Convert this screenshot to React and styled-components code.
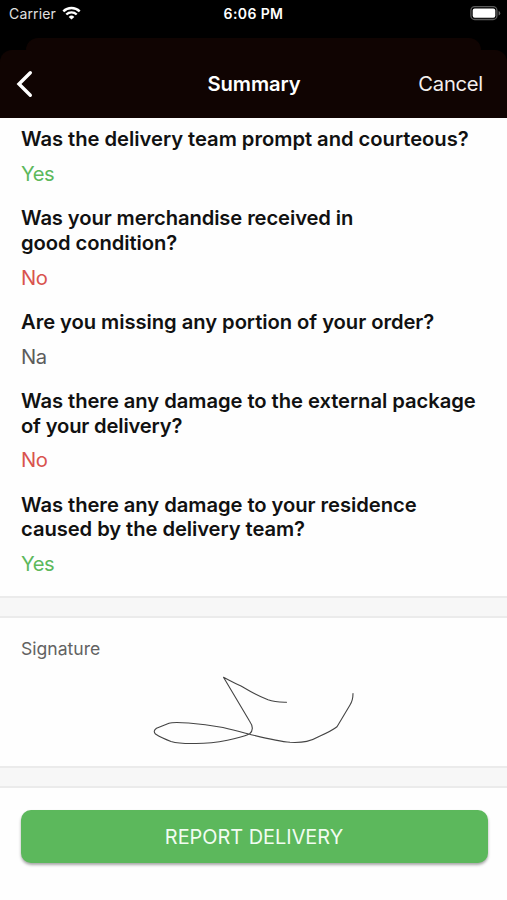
import React from "react";
import styled, { createGlobalStyle } from "styled-components";

const GlobalStyle = createGlobalStyle`
  * { box-sizing: border-box; }
  html, body { margin: 0; padding: 0; background: #fefefe; }
  body { font-family: Inter, "Liberation Sans", sans-serif; }
`;

const Screen = styled.main`
  width: 507px;
  height: 900px;
  overflow: hidden;
  display: flex;
  flex-direction: column;
  background: #fefefe;
`;

const Top = styled.div`
  height: 118px;
  flex: none;
  background: #000;
`;

const StatusBar = styled.div`
  height: 38px;
  padding: 6px 6px 0 9px;
  display: grid;
  grid-template-columns: 1fr auto 1fr;
  align-items: start;
  color: #fff;
`;

const Carrier = styled.div`
  display: flex;
  gap: 6px;
  font-size: 14px;
  line-height: 16px;
  letter-spacing: 0.15px;
  color: #e0e0e0;
`;

const Clock = styled.div`
  margin-right: 3px;
  font-size: 14px;
  font-weight: 600;
  line-height: 16px;
  letter-spacing: 0.4px;
`;

const Battery = styled.svg`
  justify-self: end;
`;

const SheetEdge = styled.div`
  height: 12px;
  margin: 0 26px;
  border-radius: 12px 12px 0 0;
  background: #100402;
`;

const NavBar = styled.header`
  height: 68px;
  padding: 0 24px 0 16px;
  display: grid;
  grid-template-columns: 1fr auto 1fr;
  align-items: center;
  border-radius: 12px 12px 0 0;
  background: #100402;
  color: #fff;
`;

const BackButton = styled.button`
  justify-self: start;
  display: flex;
  padding: 0;
  border: 0;
  background: none;
  color: inherit;
`;

const Title = styled.h1`
  margin: 0 0 0 9px;
  font-size: 20.2px;
  font-weight: 600;
  line-height: 24px;
  letter-spacing: -0.1px;
`;

const CancelButton = styled.button`
  justify-self: end;
  padding: 0;
  border: 0;
  background: none;
  font: 400 20.2px/24px Inter, sans-serif;
  letter-spacing: -0.25px;
  color: #f4efee;
`;

const Questions = styled.section`
  height: 478px;
  flex: none;
  padding: 9.4px 21px 0;
  display: flex;
  flex-direction: column;
  gap: 20px;
`;

const Item = styled.article`
  display: flex;
  flex-direction: column;
  gap: 10.1px;
  font-size: 20.2px;
  line-height: 24.5px;
`;

const Question = styled.div`
  font-weight: 600;
  color: #111;
`;

const Line = styled.span`
  display: block;
  width: max-content;
  white-space: nowrap;
  letter-spacing: ${(p) => p.$track}px;
`;

const tones = { Yes: "#5cb85c", No: "#d9534f", Na: "#5c5c5c" };

const Answer = styled.div`
  width: max-content;
  letter-spacing: -0.4px;
  color: ${(p) => tones[p.$value]};
`;

const Divider = styled.div`
  height: 22px;
  flex: none;
  border: solid #ebebeb;
  border-width: 2px 0;
  background: #f7f7f7;
`;

const SignaturePanel = styled.section`
  height: 148px;
  flex: none;
  padding: 20px 21px 0;
`;

const SignatureLabel = styled.div`
  width: max-content;
  font-size: 17.6px;
  line-height: 22px;
  color: #626262;
`;

const SignatureDrawing = styled.svg`
  display: block;
  margin: 5px 0 0 119px;
`;

const Footer = styled.footer`
  padding: 22px 19.5px 0 20.5px;
`;

const ReportButton = styled.button`
  display: block;
  width: 100%;
  height: 53px;
  padding: 1px 0 0;
  border: 0;
  border-radius: 10px;
  background: #5cb85c;
  box-shadow: 0 2px 3px rgba(0, 0, 0, 0.35);
  font: 400 19.9px/52px Inter, sans-serif;
  letter-spacing: 0;
  color: #f1fcf1;
`;

const items = [
  { lines: [["Was the delivery team prompt and courteous?", -0.03]], answer: "Yes" },
  { lines: [["Was your merchandise received in", -0.1], ["good condition?", -0.07]], answer: "No" },
  { lines: [["Are you missing any portion of your order?", -0.05]], answer: "Na" },
  { lines: [["Was there any damage to the external package", -0.05], ["of your delivery?", -0.17]], answer: "No" },
  { lines: [["Was there any damage to your residence", -0.05], ["caused by the delivery team?", -0.07]], answer: "Yes" },
];

export default function App() {
  return (
    <>
      <GlobalStyle />
      <Screen>
        <Top>
          <StatusBar>
            <Carrier>
              Carrier
              <svg width="19" height="14" viewBox="0 0 19 14" fill="none" stroke="#fff" strokeWidth="2.4">
                <path d="M1.3 5.3a11.8 11.8 0 0 1 16.4 0" />
                <path d="M4.3 8.5a7.5 7.5 0 0 1 10.4 0" />
                <path d="M6.7 10.9a4 4 0 0 1 5.6 0L9.5 13.6z" fill="#fff" stroke="none" />
              </svg>
            </Carrier>
            <Clock>6:06 PM</Clock>
            <Battery width="31" height="15" viewBox="0 0 31 15">
              <rect x="0.9" y="0.7" width="26" height="12.8" rx="3.8" fill="none" stroke="#5b5b5b" strokeWidth="1.3" />
              <rect x="2.7" y="2.5" width="22.6" height="9.2" rx="2" fill="#fff" />
              <path d="M28.6 5a2.3 2.3 0 0 1 0 4.4z" fill="#666" />
            </Battery>
          </StatusBar>
          <SheetEdge />
          <NavBar>
            <BackButton aria-label="Back">
              <svg width="17" height="28" viewBox="0 0 17 28" fill="none" stroke="#fff" strokeWidth="3.4" strokeLinecap="round" strokeLinejoin="miter">
                <path d="M14.3 2.8 3 14l11.3 11.2" />
              </svg>
            </BackButton>
            <Title>Summary</Title>
            <CancelButton>Cancel</CancelButton>
          </NavBar>
        </Top>
        <Questions>
          {items.map((item) => (
            <Item key={item.lines[0][0]}>
              <Question>
                {item.lines.map(([text, track]) => (
                  <Line key={text} $track={track}>{text}</Line>
                ))}
              </Question>
              <Answer $value={item.answer}>{item.answer}</Answer>
            </Item>
          ))}
        </Questions>
        <Divider />
        <SignaturePanel>
          <SignatureLabel>Signature</SignatureLabel>
          <SignatureDrawing width="230" height="90" viewBox="0 0 230 90" fill="none" stroke="#444" strokeWidth="1.1" strokeLinecap="round" strokeLinejoin="round">
            <path d="M146.500 37.300C140 37 135 37 128 34.700C115 30 108 25 101 21C94 18 89 15 83.500 12.300L109.500 56C113 61 113 66 109.500 69C100 73 78 78.500 56 78.500C48 78.700 38 78.500 31 76.500C23 73.500 20 72 15.500 69C13.500 67 14 65 16.500 63.300L29 58.300C34 56.500 58 58 83 62.500C94 65 101 67 109.500 69.300C125 73 138 76.300 150 77.300C164 78 171 76 179 71.500C187 68 193 65 197 61.800L210 40C212.500 36 213 33 213 28.500" />
          </SignatureDrawing>
        </SignaturePanel>
        <Divider />
        <Footer>
          <ReportButton>REPORT DELIVERY</ReportButton>
        </Footer>
      </Screen>
    </>
  );
}
